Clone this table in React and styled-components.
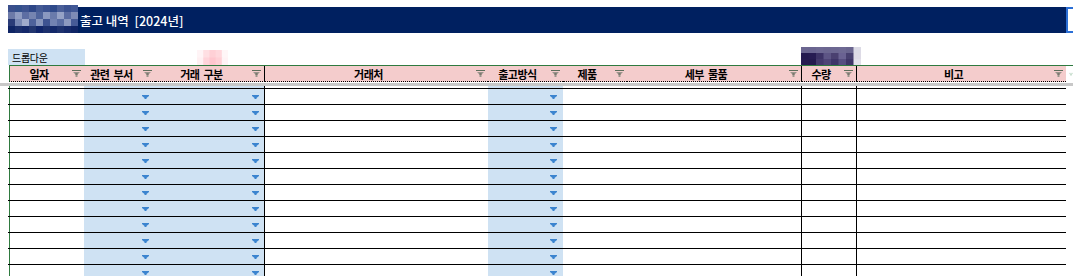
import styled, { createGlobalStyle } from 'styled-components';

const GlobalStyle = createGlobalStyle`
  html, body {
    margin: 0;
    padding: 0;
    background: #fff;
  }
  body {
    font-family: "Noto Sans CJK KR", "Noto Sans", sans-serif;
    color: #000;
  }
`;

const columns = [
  { label: '일자', w: 75 },
  { label: '관련 부서', w: 71, drop: true },
  { label: '거래 구분', w: 110, drop: true, edge: true },
  { label: '거래처', w: 223 },
  { label: '출고방식', w: 75, drop: true },
  { label: '제품', w: 64 },
  { label: '세부 물품', w: 175, edge: true },
  { label: '수량', w: 55, edge: true },
  { label: '비고', w: 209 },
];

const gridCols = columns.map((c) => `${c.w}px`).join(' ');

const logoBlocks = [
  ['#3a4f8c', '#33508c', '#3d5390', '#2e4787', '#445a94', '#3a5190', '#2f4a8a', '#4a5f98', '#3b5290', '#415896'],
  ['#6c7aa8', '#8f9cc2', '#5d6ea3', '#7584b0', '#4f649c', '#8a98c0', '#6a7bab', '#95a2c6', '#5a6ca2', '#7d8bb6'],
  ['#2a3c78', '#7888b4', '#a0abcc', '#4e629b', '#8896bd', '#3e5391', '#7282b1', '#5a6da3', '#8d9ac0', '#465b97'],
  ['#0f2565', '#1b2f6c', '#15296a', '#22366f', '#10256a', '#1c306d', '#132869', '#1e326e', '#162a6a', '#0f2465'],
];

const pinkBlocks = [
  ['#fff4f6', '#ffdfe3', '#ffd0d6', '#ffd8dd', '#fff6f7'],
  ['#fff0f2', '#ffd4da', '#ffc6ce', '#ffd0d6', '#fff3f5'],
];

const darkBlocks = [
  ['#6b6690', '#6a6590', '#6d6892', '#6b6690', '#6c6791', '#6e6993', '#6a658f', '#dcdbe6'],
  ['#241a4f', '#271c52', '#3d3366', '#5d5585', '#4a4070', '#6a6292', '#484070', '#dedbe6'],
  ['#261b50', '#241a4e', '#43396c', '#4f4577', '#3e3468', '#574e80', '#403668', '#e2e0ea'],
];

const Page = styled.div`
  width: 1073px;
  height: 276px;
  overflow: hidden;
`;

const TitleRow = styled.div`
  display: flex;
  margin-top: 7px;
  height: 26px;
`;

const TitleBar = styled.div`
  display: flex;
  align-items: center;
  margin-left: 8px;
  width: 1058px;
  background: #002060;
  color: #fff;
  font-size: 12.5px;
  font-weight: 500;
  white-space: pre;
`;

const Logo = styled.svg`
  flex: none;
  align-self: flex-start;
  margin-top: -2px;
  margin-right: 2px;
`;

const SelectedCell = styled.div`
  flex: 1;
  border: 2px solid #2b6fd6;
  border-right: none;
  background: #fff;
`;

const LabelRow = styled.div`
  display: flex;
  align-items: flex-end;
  margin-top: 16px;
  height: 16px;
`;

const DropLabel = styled.div`
  display: flex;
  align-items: center;
  margin-left: 8px;
  width: 73px;
  height: 16px;
  padding-left: 4px;
  background: #cfe2f3;
  font-size: 10px;
  letter-spacing: -0.3px;
`;

const Blur = styled.svg`
  flex: none;
  margin-left: ${(p) => p.$gap}px;
`;

const HeaderRow = styled.div`
  display: grid;
  grid-template-columns: ${gridCols} 7px;
  margin-left: 9px;
  border-top: 1px solid #2f7a3f;
`;

const HeaderCell = styled.div`
  display: flex;
  align-items: center;
  height: 15px;
  background: #f4cccc;
  border-bottom: 1px dotted #000;
  border-left: ${(p) => (p.$first ? '1px solid #2f7a3f' : 'none')};
  border-right: ${(p) => (p.$edge ? '1px solid #000' : 'none')};
  font-size: 11px;
  font-weight: 700;
  letter-spacing: -0.5px;
  word-spacing: 2px;
`;

const HeaderLabel = styled.span`
  flex: 1;
  text-align: center;
  white-space: pre;
`;

const FilterButton = styled.span`
  display: flex;
  justify-content: center;
  align-items: center;
  width: 16px;
  flex: none;
`;

const ExtraCell = styled.div`
  display: flex;
  align-items: center;
  padding-left: 3px;
  background: #fff;
  opacity: 0.6;
`;

const FreezeLine = styled.div`
  height: 3px;
  margin-top: 1px;
  background: #c8c8c8;
`;

const Spacer = styled.div`
  display: grid;
  grid-template-columns: ${gridCols};
  margin-left: 9px;
  height: 2px;
`;

const BodyRow = styled.div`
  display: grid;
  grid-template-columns: ${gridCols};
  margin-left: 8px;
  padding-left: 1px;
  width: 1058px;
  box-sizing: border-box;
  border-top: 1px solid #000;
`;

const BodyCell = styled.div`
  box-sizing: border-box;
  display: flex;
  align-items: center;
  justify-content: flex-end;
  height: ${(p) => p.$h || 15}px;
  padding-right: ${(p) => (p.$edge ? 5 : 6)}px;
  background: ${(p) => (p.$drop ? '#cfe2f3' : '#fff')};
  border-left: ${(p) => (p.$first ? '1px solid #2f7a3f' : 'none')};
  border-right: ${(p) => (p.$edge ? '1px solid #000' : 'none')};
`;

const Mosaic = ({ blocks, w, h, gap, as: Comp = Blur }) => {
  const rows = blocks.length;
  const cols = blocks[0].length;
  const bw = w / cols;
  const bh = h / rows;
  return (
    <Comp $gap={gap} width={w} height={h} viewBox={`0 0 ${w} ${h}`}>
      {blocks.map((row, r) =>
        row.map((c, i) => (
          <rect key={`${r}-${i}`} x={i * bw} y={r * bh} width={bw + 0.5} height={bh + 0.5} fill={c} />
        ))
      )}
    </Comp>
  );
};

const FilterIcon = ({ tone = 'gray' }) => (
  <svg width="9" height="7" viewBox="0 0 9 7">
    <rect x="0" y="0" width="9" height="1" fill={tone === 'gray' ? '#5e6e5c' : '#6aa67a'} />
    <path d="M1 2h7L5.5 4.5V7h-2V4.5z" fill={tone === 'gray' ? '#9a958c' : '#a9cdb2'} />
    <rect x="3.5" y="3" width="2" height="2" fill={tone === 'gray' ? '#7d776f' : '#8fbf9b'} />
  </svg>
);

const DropArrow = () => (
  <svg width="7" height="4" viewBox="0 0 7 4">
    <path d="M0 0h7v1L4.5 3v1h-2V3L0 1z" fill="#3b84cf" />
  </svg>
);

const rows = Array.from({ length: 12 }, (_, i) => i);

export default function App() {
  return (
    <Page>
      <GlobalStyle />
      <TitleRow>
        <TitleBar>
          <Mosaic as={Logo} blocks={logoBlocks} w={70} h={28} />
          {'출고 내역  [2024년]'}
        </TitleBar>
        <SelectedCell />
      </TitleRow>

      <LabelRow>
        <DropLabel>드롭다운</DropLabel>
        <Mosaic blocks={pinkBlocks} w={31} h={15} gap={112} />
        <Mosaic blocks={darkBlocks} w={60} h={18} gap={573} />
      </LabelRow>

      <HeaderRow>
        {columns.map((c, i) => (
          <HeaderCell key={c.label} $first={i === 0} $edge={c.edge}>
            <HeaderLabel>{c.label}</HeaderLabel>
            <FilterButton>
              <FilterIcon />
            </FilterButton>
          </HeaderCell>
        ))}
        <ExtraCell>
          <FilterIcon tone="green" />
        </ExtraCell>
      </HeaderRow>

      <FreezeLine />

      <Spacer>
        {columns.map((c, i) => (
          <BodyCell key={c.label} $first={i === 0} $edge={c.edge} $drop={c.drop} $h={2} />
        ))}
      </Spacer>

      {rows.map((r) => (
        <BodyRow key={r}>
          {columns.map((c, i) => (
            <BodyCell key={c.label} $first={i === 0} $edge={c.edge} $drop={c.drop}>
              {c.drop && <DropArrow />}
            </BodyCell>
          ))}
        </BodyRow>
      ))}
    </Page>
  );
}
